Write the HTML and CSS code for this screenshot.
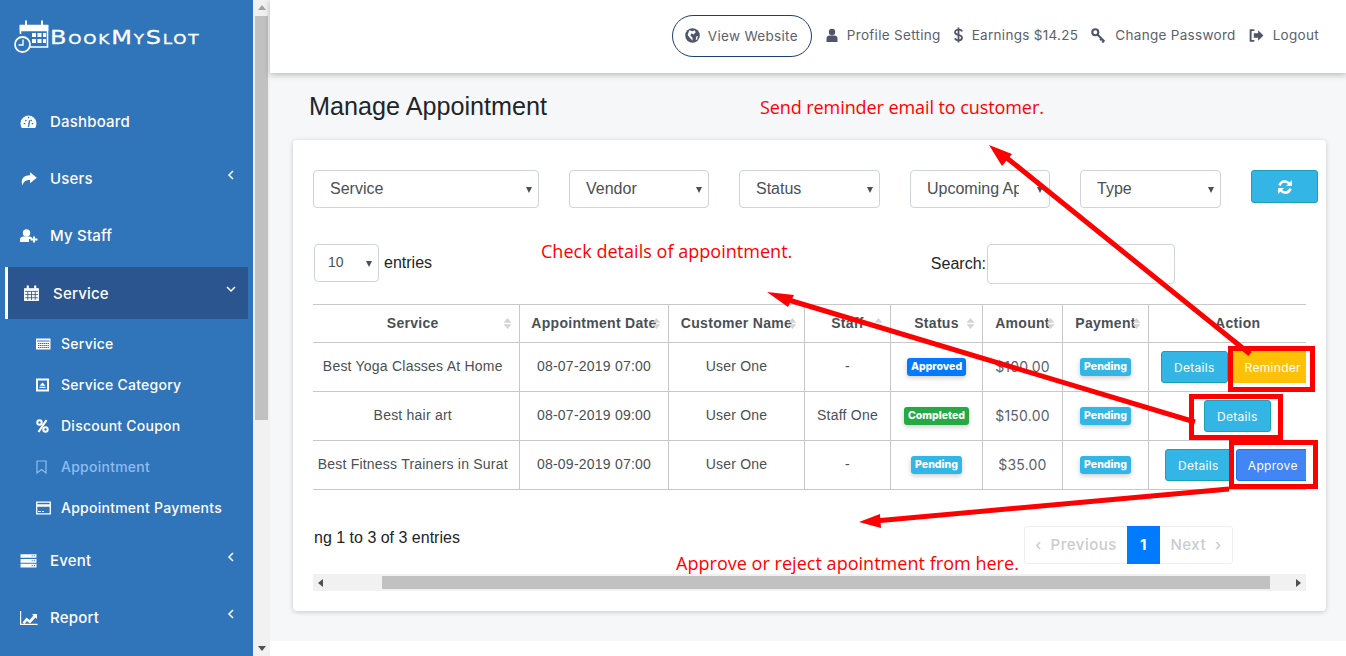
FILE: index.html
```html
<!DOCTYPE html>
<html>
  <head>
    <title>Manage Appointment</title>
    <link rel="stylesheet" href="styles.css">
  </head>
  <body>
    <div class="page">
      <aside class="sidebar">
        <div class="logo">
          <svg class="logo-icon" width="36" height="34" viewBox="0 0 36 34" fill="none" stroke="#fff" stroke-width="1.600">
            <path d="M6.500 14V5.800h27V27H16" />
            <path d="M6.500 5.500h27v5h-27z" fill="#fff" />
            <path d="M12 .5v7M28 .5v7" stroke-width="2" />
            <path d="M18 13h4v4h-4zM23.500 13h4v4h-4zM29 13h3v4h-3zM18 19h4v4h-4zM23.500 19h4v4h-4zM29 19h3v4h-3z" fill="#fff" stroke="none" />
            <circle cx="8.500" cy="24.500" r="7.500" fill="#3074b9" stroke-width="1.800" />
            <path d="M9 19.500v5.500H4.500" stroke-width="1.400" />
          </svg>
          <span class="logo-text">BookMySlot</span>
        </div>
        <nav class="menu">
          <a class="menu-item">
            <svg class="menu-icon" viewBox="0 0 16 16"><path fill="#fff" d="M1.700 14A7.500 7.500 0 1 1 14.300 14z" /><path stroke="#3074b9" stroke-width="1.300" d="M8 13l1-6M3.500 10h1.500M5 6.500l1 1M8 3.500V5M11 6.500l-1 1M11 10h1.500" /></svg>
            <span>Dashboard</span>
          </a>
          <a class="menu-item">
            <svg class="menu-icon" viewBox="0 0 16 16"><path fill="#fff" d="M9.500 2L15.800 7.200 9.500 12.500V9.500C6 9.500 3.500 10.300 2.500 14.500 .2 9.500 2.700 5 9.500 5z" /></svg>
            <span>Users</span>
            <svg class="chevron" width="8" height="10" viewBox="0 0 8 10"><path d="M6 1L2 5l4 4" /></svg>
          </a>
          <a class="menu-item">
            <svg class="menu-icon wide" viewBox="0 0 18 16"><circle cx="6.500" cy="5" r="3.700" fill="#fff" /><path fill="#fff" d="M0 14v-2.500C0 9.500 1.500 8.500 3.500 8.500h6c1.500 0 2.500 1 2.500 1.500v1H9v3z" /><path stroke="#fff" stroke-width="2" d="M14 8.500v6M10.500 11.500h7" /></svg>
            <span>My Staff</span>
          </a>
          <a class="menu-item active">
            <svg class="menu-icon" viewBox="0 0 16 16"><path fill="#fff" d="M1 3h14v12H1z" /><path stroke="#fff" stroke-width="2" d="M4.500 .500v3M11.500 .500v3" /><path stroke="#2b558e" stroke-width=".8" d="M2 6h12M2 9h12M2 12h12M4.500 6v8M8 6v8M11.500 6v8" /></svg>
            <span>Service</span>
            <svg class="chevron" width="10" height="8" viewBox="0 0 10 8"><path d="M1 2l4 4 4-4" /></svg>
          </a>
          <div class="submenu">
            <a class="sub-item">
              <svg class="sub-icon" width="15" height="14" viewBox="0 0 15 14"><path fill="#fff" d="M0 1.500h14.500v11H0z" /><path stroke="#3074b9" d="M1 4h12.500" /><path stroke="#3074b9" stroke-dasharray="1.500 .5" d="M2 6.500h11M2 8.500h11M2 10.500h11" /></svg>
              <span>Service</span>
            </a>
            <a class="sub-item">
              <svg class="sub-icon" width="15" height="14" viewBox="0 0 15 14"><path fill="#fff" d="M0 .5h13v13H0z" /><path fill="#3074b9" d="M2 2.500h9v9H2z" /><path fill="#fff" d="M6.500 4.500l3 3.200H3.500zM3.500 8.700h6v1.300h-6z" /></svg>
              <span>Service Category</span>
            </a>
            <a class="sub-item">
              <svg class="sub-icon" width="15" height="14" viewBox="0 0 15 14"><circle cx="3.500" cy="3.500" r="2.200" fill="none" stroke="#fff" stroke-width="2" /><circle cx="9.500" cy="10.500" r="2.200" fill="none" stroke="#fff" stroke-width="2" /><path stroke="#fff" stroke-width="2.200" d="M10.500 1L2.500 13" /></svg>
              <span>Discount Coupon</span>
            </a>
            <a class="sub-item current">
              <svg class="sub-icon" width="15" height="14" viewBox="0 0 15 14"><path fill="none" stroke="#8fbcf0" stroke-width="1.200" d="M1 1h9v12L5.500 9.500 1 13z" /></svg>
              <span>Appointment</span>
            </a>
            <a class="sub-item">
              <svg class="sub-icon" width="15" height="14" viewBox="0 0 15 14"><path fill="none" stroke="#fff" stroke-width="1.300" d="M.7 1.200h13.600v11.600H.7z" /><path stroke="#fff" stroke-width="2.500" d="M1 4.500h13" /><path stroke="#fff" d="M2 10.500h3M6 10.500h2" /></svg>
              <span>Appointment Payments</span>
            </a>
          </div>
          <a class="menu-item">
            <svg class="menu-icon" viewBox="0 0 16 16"><path fill="#fff" d="M.5 2h15v3.500H.5zM.5 6.500h15V10H.5zM.5 11h15v3.500H.5z" /><path fill="#3074b9" d="M11 3h1v1h-1zM13 3h1v1h-1zM11 7.800h1v1h-1zM13 7.800h1v1h-1zM11 12.300h1v1h-1zM13 12.300h1v1h-1z" /></svg>
            <span>Event</span>
            <svg class="chevron" width="8" height="10" viewBox="0 0 8 10"><path d="M6 1L2 5l4 4" /></svg>
          </a>
          <a class="menu-item">
            <svg class="menu-icon wide" viewBox="0 0 18 16"><path fill="none" stroke="#fff" stroke-width="1.200" d="M.6 1v13.400h17" /><path fill="#fff" d="M2.500 12.500l4-5 3 2.500 4-4.500-1.500-1.500h5v5l-1.500-1.500-5.500 6-3-2.500-2.500 3z" /></svg>
            <span>Report</span>
            <svg class="chevron" width="8" height="10" viewBox="0 0 8 10"><path d="M6 1L2 5l4 4" /></svg>
          </a>
        </nav>
      </aside>

      <div class="side-scroll">
        <div class="scroll-up"></div>
        <div class="scroll-thumb"></div>
        <div class="scroll-down"></div>
      </div>

      <div class="main">
        <header class="topbar">
          <a class="top-link pill">
            <svg width="15" height="15" viewBox="0 0 14 14"><circle cx="7" cy="7" r="6.800" fill="#50566a" /><path fill="#fff" d="M4 2l3 1 2-1 1 2-2 2-2-1-1 2 2 2v3L4.500 9 2.500 6.500zM10.500 8l1.500-.5-.5 3-1.500 1z" /></svg>
            <span>View Website</span>
          </a>
          <a class="top-link">
            <svg width="12" height="15" viewBox="0 0 12 14"><circle cx="6" cy="3.500" r="3.200" fill="#50566a" /><path fill="#50566a" d="M.5 13.500V10c0-2 1.500-3 3-3h5c1.500 0 3 1 3 3v3.500z" /></svg>
            <span>Profile Setting</span>
          </a>
          <a class="top-link">
            <svg width="9" height="16" viewBox="0 0 9 16"><path fill="none" stroke="#50566a" stroke-width="1.800" d="M8 4.500C7.500 3 6 2.700 4.500 2.700 2.500 2.700 1 3.700 1 5.200c0 3.600 7 1.800 7 5.500 0 1.600-1.500 2.600-3.500 2.600-1.600 0-3-.5-3.500-2" /><path stroke="#50566a" stroke-width="1.800" d="M4.500 .5v15" /></svg>
            <span>Earnings $14.25</span>
          </a>
          <a class="top-link">
            <svg width="15" height="15" viewBox="0 0 14 14"><circle cx="4" cy="4" r="2.800" fill="none" stroke="#50566a" stroke-width="2" /><path stroke="#50566a" stroke-width="2" d="M6 6l6.500 6.500M10 10l-1.500 1.500M12 12l-1.500 1.500" /></svg>
            <span>Change Password</span>
          </a>
          <a class="top-link">
            <svg width="15" height="15" viewBox="0 0 14 14"><path fill="none" stroke="#50566a" stroke-width="1.800" d="M5 2H1.500v10H5" /><path fill="#50566a" d="M4.500 5h4V2l5 5-5 5V9h-4z" /></svg>
            <span>Logout</span>
          </a>
        </header>

        <div class="content">
          <h1 class="page-title">Manage Appointment</h1>

          <div class="card">
            <div class="filters">
              <div class="select f-service"><select class="field"><option>Service</option></select></div>
              <div class="select f-small"><select class="field"><option>Vendor</option></select></div>
              <div class="select f-wide"><select class="field"><option>Status</option></select></div>
              <div class="select f-small"><select class="field"><option>Upcoming Appointment</option></select></div>
              <div class="select f-wide"><select class="field"><option>Type</option></select></div>
              <button class="refresh" type="button">
                <svg width="16" height="16" viewBox="0 0 16 16" fill="none" stroke="#fff" stroke-width="2.600"><path d="M2.500 6.500C3.500 3.500 6 2.200 8.500 2.500c1.800.2 3 1.200 4 2.500" /><path d="M13.500 9.500c-1 3-3.500 4.300-6 4-1.800-.2-3-1.200-4-2.500" /><path fill="#fff" stroke="none" d="M15 1v6H9zM1 15V9h6z" /></svg>
              </button>
            </div>

            <div class="table-tools">
              <div class="length">
                <div class="select f-entries"><select class="field entries"><option>10</option></select></div>
                <span>entries</span>
              </div>
              <div class="search">
                <label for="search">Search:</label>
                <input class="search-box" id="search" type="text" />
              </div>
            </div>

            <div class="table-wrap">
              <table class="data-table">
                <thead>
                  <tr>
                    <th class="c1 sort">Service</th>
                    <th class="c2 sort">Appointment Date</th>
                    <th class="c3 sort">Customer Name</th>
                    <th class="c4 sort">Staff</th>
                    <th class="c5 sort">Status</th>
                    <th class="c6 sort">Amount</th>
                    <th class="c7 sort">Payment</th>
                    <th class="c8">Action</th>
                  </tr>
                </thead>
                <tbody>
                  <tr>
                    <td>Best Yoga Classes At Home</td>
                    <td>08-07-2019 07:00</td>
                    <td>User One</td>
                    <td>-</td>
                    <td><span class="badge blue">Approved</span></td>
                    <td class="money">$100.00</td>
                    <td><span class="badge info">Pending</span></td>
                    <td class="actions"><button class="btn info" type="button">Details</button><button class="btn amber" type="button">Reminder</button></td>
                  </tr>
                  <tr>
                    <td>Best hair art</td>
                    <td>08-07-2019 09:00</td>
                    <td>User One</td>
                    <td>Staff One</td>
                    <td><span class="badge green">Completed</span></td>
                    <td class="money">$150.00</td>
                    <td><span class="badge info">Pending</span></td>
                    <td class="actions"><button class="btn info" type="button">Details</button></td>
                  </tr>
                  <tr>
                    <td>Best Fitness Trainers in Surat</td>
                    <td>08-09-2019 07:00</td>
                    <td>User One</td>
                    <td>-</td>
                    <td><span class="badge info">Pending</span></td>
                    <td class="money">$35.00</td>
                    <td><span class="badge info">Pending</span></td>
                    <td class="actions"><button class="btn info" type="button">Details</button><button class="btn primary" type="button">Approve</button></td>
                  </tr>
                </tbody>
              </table>
            </div>

            <div class="table-foot">
              <div class="info-text">ng 1 to 3 of 3 entries</div>
              <div class="pager">
                <a class="page-link">&#8249;&nbsp; Previous</a>
                <a class="page-link on">1</a>
                <a class="page-link">Next &nbsp;&#8250;</a>
              </div>
            </div>

            <div class="h-scroll">
              <div class="scroll-left"></div>
              <div class="h-thumb"></div>
              <div class="scroll-right"></div>
            </div>
          </div>
        </div>
      </div>
    </div>

    <!-- annotations drawn on top of the screenshot -->
    <svg class="marks" width="1346" height="656" viewBox="0 0 1346 656">
      <g fill="none" stroke="#f00" stroke-width="5">
        <path d="M1250 354L1002 154" />
        <path d="M1195 422L782 298" />
        <path d="M1229 489L875 521" />
        <rect x="1230.500" y="348.500" width="82" height="41" />
        <rect x="1191.500" y="396.500" width="89" height="41" />
        <rect x="1231.500" y="442.500" width="84" height="44" />
      </g>
      <g fill="#f00">
        <path d="M989 145L1012 154 1002 166z" />
        <path d="M767 292L794 295 788 307z" />
        <path d="M859 522L880 514 881 528z" />
      </g>
    </svg>
    <div class="note n1">Send reminder email to customer.</div>
    <div class="note n2">Check details of appointment.</div>
    <div class="note n3">Approve or reject apointment from here.</div>
  </body>
</html>
```

FILE: styles.css
```css
* {
  box-sizing: border-box;
}

html,
body {
  margin: 0;
  height: 656px;
  overflow: hidden;
  background-color: white;
}

body {
  font-family: "Liberation Sans", Arial, sans-serif;
  font-size: 16px;
  color: #212529;
  position: relative;
}

.page {
  display: flex;
  height: 656px;
}

/* sidebar */
.sidebar {
  width: 253px;
  flex: none;
  background-color: #3074b9;
  color: white;
  font-family: Inter, sans-serif;
}

.logo {
  height: 93px;
  padding: 20px 0 0 14px;
  display: flex;
  align-items: flex-start;
}

.logo-icon {
  flex: none;
}

.logo-text {
  font-family: "DejaVu Sans", sans-serif;
  font-variant: small-caps;
  font-size: 20px;
  letter-spacing: 1.5px;
  line-height: 34px;
  -webkit-text-stroke: 0.3px white;
  transform: scaleX(1.2);
  transform-origin: left center;
}

.menu-item {
  height: 57px;
  display: flex;
  align-items: center;
  padding-left: 20px;
  font-size: 15px;
  font-weight: 500;
  letter-spacing: 0.2px;
  position: relative;
}

.menu-icon {
  width: 17px;
  height: 17px;
  margin-right: 13px;
  flex: none;
}

.menu-icon.wide {
  width: 18px;
  height: 16px;
  margin-right: 12px;
}

.chevron {
  position: absolute;
  right: 18px;
  top: 20px;
  fill: none;
  stroke: white;
  stroke-width: 1.5;
}

.menu-item.active {
  height: 52px;
  margin: 3px 5px 2px 5px;
  padding-left: 15px;
  background-color: #2b558e;
  border-left: 3px solid white;
}

.menu-item.active .chevron {
  right: 12px;
  top: 18px;
}

.submenu {
  margin: 4px 0 4px;
}

.sub-item {
  height: 41px;
  display: flex;
  align-items: center;
  padding-left: 36px;
  font-size: 14px;
  font-weight: 500;
  letter-spacing: 0.25px;
}

.sub-icon {
  margin-right: 10px;
  flex: none;
}

.sub-item.current {
  color: #8fbcf0;
}

/* sidebar scrollbar */
.side-scroll {
  width: 17px;
  flex: none;
  background-color: #f1f1f1;
  position: relative;
}

.scroll-thumb {
  position: absolute;
  left: 2px;
  top: 16px;
  width: 13px;
  height: 404px;
  background-color: #c1c1c1;
}

.scroll-up,
.scroll-down {
  position: absolute;
  left: 5px;
  width: 0;
  height: 0;
  border-left: 4px solid transparent;
  border-right: 4px solid transparent;
}

.scroll-up {
  top: 5px;
  border-bottom: 5px solid #a3a3a3;
}

.scroll-down {
  top: 646px;
  border-top: 5px solid #505050;
}

/* main area */
.main {
  flex: 1;
  min-width: 0;
  display: flex;
  flex-direction: column;
}

.topbar {
  height: 73px;
  flex: none;
  background-color: white;
  box-shadow: 0 2px 6px rgba(0, 0, 0, 0.25);
  display: flex;
  align-items: center;
  justify-content: flex-end;
  padding: 0 27px 3px 0;
  gap: 13px;
  font-family: Inter, sans-serif;
  font-size: 13.5px;
  color: #5c5f6e;
  position: relative;
}

.top-link {
  display: flex;
  align-items: center;
  gap: 9px;
  letter-spacing: 0.3px;
}

.pill {
  height: 42px;
  width: 140px;
  padding-left: 12px;
  gap: 8px;
  margin-right: 1px;
  border: 1px solid #1f3f6e;
  border-radius: 21px;
  margin-top: 1px;
}

.content {
  height: 568px;
  background-color: #f6f7f9;
  padding: 0 20px 0 23px;
}

.page-title {
  margin: 0;
  padding-left: 16px;
  height: 67px;
  font-size: 25.200px;
  font-weight: 400;
  line-height: 67px;
}

.card {
  height: 471px;
  background-color: white;
  border-radius: 4px;
  box-shadow: 0 1px 5px rgba(0, 0, 0, 0.2);
  padding: 30px 8px 0 20px;
}

.filters {
  display: flex;
  align-items: flex-start;
  gap: 30px;
}

.select {
  position: relative;
  flex: none;
}

.select::after {
  content: "";
  position: absolute;
  right: 7px;
  top: 17px;
  border-left: 3.500px solid transparent;
  border-right: 3.500px solid transparent;
  border-top: 6px solid #495057;
  pointer-events: none;
}

.field {
  display: block;
  appearance: none;
  width: 100%;
  height: 38px;
  padding: 0 30px 2px 16px;
  border: 1px solid #ced4da;
  border-radius: 4px;
  background-color: white;
  font-family: "Liberation Sans", Arial, sans-serif;
  font-size: 16px;
  color: #495057;
}

.f-service {
  width: 226px;
}

.f-small {
  width: 140px;
}

.f-wide {
  width: 141px;
}

.f-entries {
  width: 65px;
}

.refresh {
  width: 67px;
  height: 33px;
  flex: none;
  background-color: #33b5e5;
  border: 1px solid #17a2b8;
  border-radius: 3px;
  padding: 3px 0 0;
}

.table-tools {
  display: flex;
  justify-content: space-between;
  margin-top: 36px;
  padding: 0 143px 0 1px;
  height: 60px;
}

.length {
  display: flex;
  align-items: center;
  gap: 5px;
  height: 38px;
}

.entries {
  font-size: 14px;
  padding-left: 13px;
}

.search {
  display: flex;
  align-items: center;
  height: 40px;
}

.search-box {
  width: 188px;
  height: 40px;
  border: 1px solid #ced4da;
  border-radius: 4px;
  margin-left: 1px;
}

/* table */
.table-wrap {
  width: 993px;
  overflow: hidden;
}

.data-table {
  width: 1013px;
  table-layout: fixed;
  border-collapse: collapse;
  font-size: 14px;
  letter-spacing: 0.22px;
  color: #495057;
}

.c1 { width: 206px; }
.c2 { width: 149px; }
.c3 { width: 136px; }
.c4 { width: 86px; }
.c5 { width: 92px; }
.c6 { width: 80px; }
.c7 { width: 86px; }
.c8 { width: 178px; }

.data-table th,
.data-table td {
  border-top: 1px solid #c8c8c8;
  border-bottom: 1px solid #c8c8c8;
  border-left: 1px solid #c8c8c8;
  padding: 0 0 2px 1px;
  text-align: center;
  white-space: nowrap;
  overflow: hidden;
}

.data-table th:first-child,
.data-table td:first-child {
  border-left: none;
  padding-right: 7px;
}

.data-table th {
  height: 38px;
  font-weight: 700;
  letter-spacing: 0.3px;
  position: relative;
}

.data-table td {
  height: 49px;
}

.data-table td.actions {
  padding: 0;
}

.sort::after {
  content: "";
  position: absolute;
  right: 7px;
  top: 13px;
  width: 8px;
  height: 11px;
  background-color: #d4d4d4;
  clip-path: polygon(50% 0, 100% 44%, 50% 44%, 50% 56%, 100% 56%, 50% 100%, 0 56%, 50% 56%, 50% 44%, 0 44%);
}

.money {
  font-family: Inter, sans-serif;
  letter-spacing: 0.2px;
  color: #5c5f6e;
}

.badge {
  display: inline-block;
  padding: 3px 4px;
  border-radius: 3px;
  font-family: Inter, sans-serif;
  font-size: 10.500px;
  font-weight: 800;
  line-height: 12px;
  letter-spacing: 0;
  color: white;
  box-shadow: 0 2px 5px rgba(0, 0, 0, 0.2);
  vertical-align: -1px;
}

.badge.blue { background-color: #007bff; }
.badge.green { background-color: #28a745; }
.badge.info { background-color: #33b5e5; }

.btn {
  height: 32px;
  padding: 0;
  border: 1px solid #17a2b8;
  border-radius: 3px;
  font-family: Inter, sans-serif;
  font-size: 12px;
  letter-spacing: 0.3px;
  color: white;
  vertical-align: middle;
}

.btn.info {
  width: 67px;
  background-color: #33b5e5;
}

.btn.amber {
  width: 82px;
  margin-left: 4px;
  background-color: #ffc107;
  border-color: #ffc107;
}

.btn.primary {
  width: 74px;
  margin-left: 4px;
  background-color: #4285f4;
  border-color: #1a73e8;
}

.table-foot {
  display: flex;
  justify-content: space-between;
  align-items: flex-start;
  height: 48px;
  margin-top: 36px;
  padding: 0 73px 0 1px;
}

.info-text {
  line-height: 24px;
}

.pager {
  display: flex;
  height: 38px;
  margin-right: 12px;
  border: 1px solid #eee;
  border-radius: 3px;
  font-family: Inter, sans-serif;
  font-size: 15px;
  font-weight: 500;
  letter-spacing: 0.5px;
  color: #c9ccd1;
}

.page-link {
  display: flex;
  align-items: center;
  justify-content: center;
  width: 102px;
  padding-bottom: 2px;
}

.page-link:last-child {
  width: 72px;
}

.page-link.on {
  width: 33px;
  margin: -1px 0;
  background-color: #007bff;
  color: white;
  font-weight: 700;
}

/* horizontal scrollbar */
.h-scroll {
  width: 993px;
  height: 17px;
  background-color: #f1f1f1;
  position: relative;
}

.h-thumb {
  position: absolute;
  left: 69px;
  top: 2px;
  width: 888px;
  height: 13px;
  background-color: #c1c1c1;
}

.scroll-left,
.scroll-right {
  position: absolute;
  top: 5px;
  width: 0;
  height: 0;
  border-top: 4px solid transparent;
  border-bottom: 4px solid transparent;
}

.scroll-left {
  left: 5px;
  border-right: 5px solid #505050;
}

.scroll-right {
  right: 5px;
  border-left: 5px solid #505050;
}

/* annotations */
.marks {
  position: absolute;
  left: 0;
  top: 0;
}

.note {
  position: absolute;
  font-family: "Open Sans", sans-serif;
  font-size: 18px;
  letter-spacing: -0.08px;
  line-height: 24px;
  color: #f00;
  white-space: nowrap;
}

.n1 {
  left: 760px;
  top: 95px;
}

.n2 {
  left: 541px;
  top: 239px;
  letter-spacing: 0.03px;
}

.n3 {
  left: 676px;
  top: 551px;
  letter-spacing: 0.03px;
}
```
